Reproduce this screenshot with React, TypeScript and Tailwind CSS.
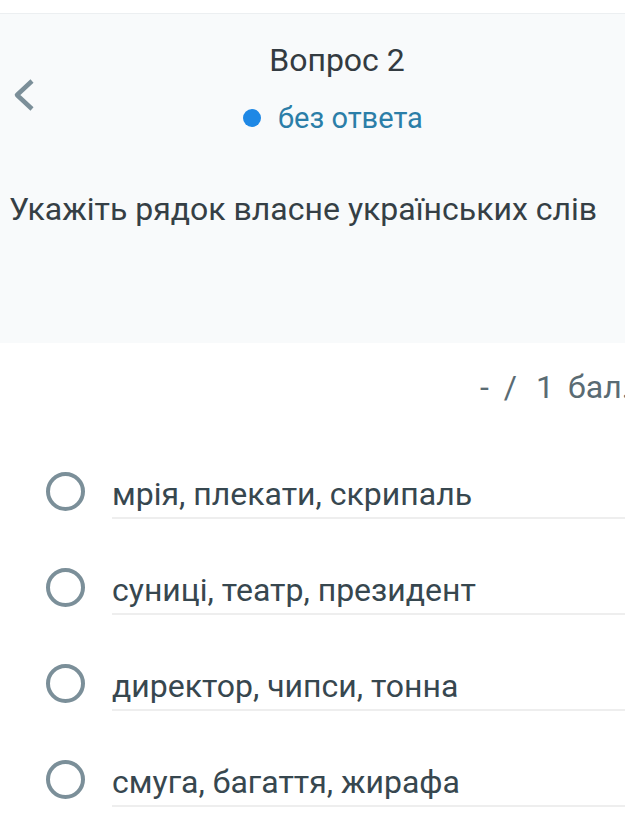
const options = [
  'мрія, плекати, скрипаль',
  'суниці, театр, президент',
  'директор, чипси, тонна',
  'смуга, багаття, жирафа',
];

function Radio() {
  return (
    <span className="block w-[39px] h-[39px] shrink-0 rounded-full border-[4px] border-[#7b8f99]" />
  );
}

export default function App() {
  return (
    <div
      className="w-[625px] h-[822px] overflow-hidden bg-white text-[#37474f]"
      style={{ fontFamily: 'Roboto, "Noto Sans", sans-serif' }}
    >
      {/* Top strip */}
      <div className="h-[14px] border-b border-[#eceff1] bg-white" />

      {/* Question header */}
      <div className="relative h-[329px] bg-[#f8fafb]">
        {/* Back chevron */}
        <svg
          className="absolute left-[12px] top-[63px]"
          width="24"
          height="36"
          viewBox="0 0 24 36"
          fill="none"
        >
          <polyline
            points="20,4 5,18 20,32"
            stroke="#7b8f99"
            strokeWidth="4.5"
            strokeLinejoin="round"
          />
        </svg>

        <div className="flex flex-col items-center pt-[26px]">
          <div className="pl-[49px] text-[32px] leading-[40px] text-[#333b41]">Вопрос 2</div>
          <div className="mt-[20px] flex items-center gap-[17px] pl-[41px]">
            <span className="block w-[18px] h-[18px] rounded-full bg-[#1e88e5]" />
            <span className="text-[29px] leading-[36px] text-[#2b7ea8]">без ответа</span>
          </div>
        </div>
        <p className="mt-[53px] px-[9px] text-[32px] leading-[40px] text-[#353f45] whitespace-nowrap">
          Укажіть рядок власне українських слів
        </p>
      </div>

      {/* Points */}
      <div className="mt-[24px] flex items-center pl-[480px] whitespace-nowrap text-[32px] leading-[40px] text-[#5a6b73]">
        <span>-</span>
        <span className="ml-[15px]">/</span>
        <span className="ml-[19px]">1</span>
        <span className="ml-[14px]">бал.</span>
      </div>

      {/* Options */}
      <div className="mt-[16px] flex flex-col">
        {options.map((option) => (
          <div key={option} className="flex items-start h-[96px]">
            <div className="w-[112px] shrink-0 pt-[49px] pl-[46px]">
              <Radio />
            </div>
            <div className="flex-1 h-[96px] border-b-2 border-[#eeeeee] pt-[51px]">
              <span className="block text-[32px] leading-[40px] text-[#37474f] whitespace-nowrap">
                {option}
              </span>
            </div>
          </div>
        ))}
      </div>
    </div>
  );
}
